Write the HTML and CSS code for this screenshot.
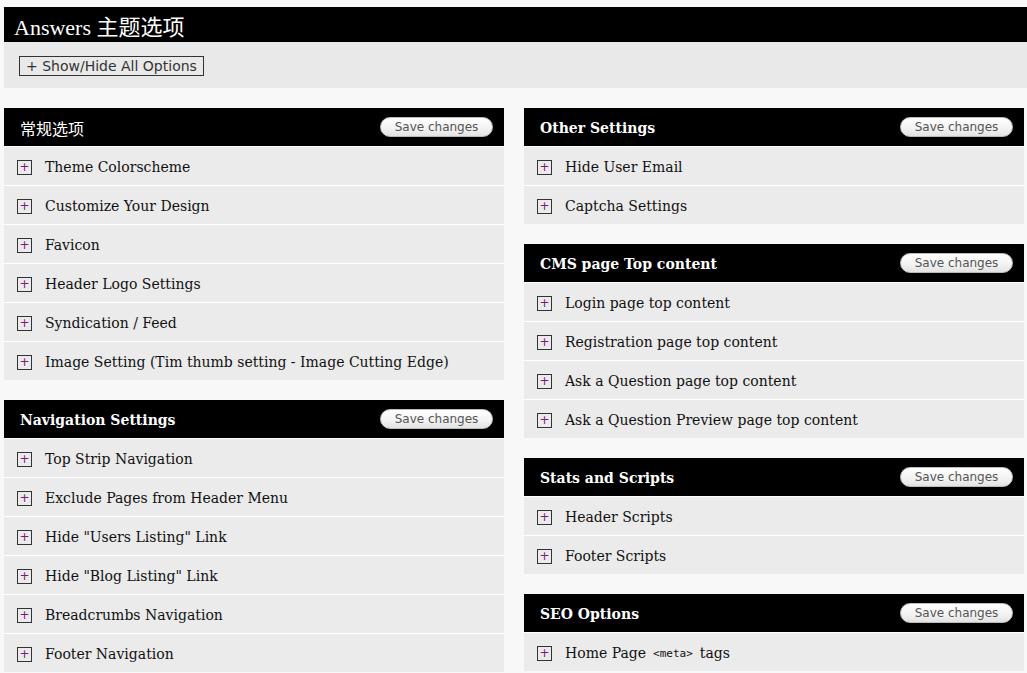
FILE: index.html
```html
<!DOCTYPE html>
<html lang="zh-CN">
<head>
    <meta charset="UTF-8">
    <title>Answers 主题选项</title>
    <link rel="stylesheet" href="styles.css">
</head>
<body>
    <div class="page-title">
        <h1>Answers 主题选项</h1>
    </div>
    <div class="toolbar">
        <button class="toggle-all">+ Show/Hide All Options</button>
    </div>

    <div class="columns">
        <div class="column">
            <div class="panel">
                <div class="panel-head">
                    <h2 class="cjk">常规选项</h2>
                    <button class="save">Save changes</button>
                </div>
                <div class="option"><span class="plus">+</span>Theme Colorscheme</div>
                <div class="option"><span class="plus">+</span>Customize Your Design</div>
                <div class="option"><span class="plus">+</span>Favicon</div>
                <div class="option"><span class="plus">+</span>Header Logo Settings</div>
                <div class="option"><span class="plus">+</span>Syndication / Feed</div>
                <div class="option"><span class="plus">+</span>Image Setting (Tim thumb setting - Image Cutting Edge)</div>
            </div>
            <div class="panel">
                <div class="panel-head">
                    <h2>Navigation Settings</h2>
                    <button class="save">Save changes</button>
                </div>
                <div class="option"><span class="plus">+</span>Top Strip Navigation</div>
                <div class="option"><span class="plus">+</span>Exclude Pages from Header Menu</div>
                <div class="option"><span class="plus">+</span>Hide "Users Listing" Link</div>
                <div class="option"><span class="plus">+</span>Hide "Blog Listing" Link</div>
                <div class="option"><span class="plus">+</span>Breadcrumbs Navigation</div>
                <div class="option"><span class="plus">+</span>Footer Navigation</div>
            </div>
        </div>

        <div class="column">
            <div class="panel">
                <div class="panel-head">
                    <h2>Other Settings</h2>
                    <button class="save">Save changes</button>
                </div>
                <div class="option"><span class="plus">+</span>Hide User Email</div>
                <div class="option"><span class="plus">+</span>Captcha Settings</div>
            </div>
            <div class="panel">
                <div class="panel-head">
                    <h2>CMS page Top content</h2>
                    <button class="save">Save changes</button>
                </div>
                <div class="option"><span class="plus">+</span>Login page top content</div>
                <div class="option"><span class="plus">+</span>Registration page top content</div>
                <div class="option"><span class="plus">+</span>Ask a Question page top content</div>
                <div class="option"><span class="plus">+</span>Ask a Question Preview page top content</div>
            </div>
            <div class="panel">
                <div class="panel-head">
                    <h2>Stats and Scripts</h2>
                    <button class="save">Save changes</button>
                </div>
                <div class="option"><span class="plus">+</span>Header Scripts</div>
                <div class="option"><span class="plus">+</span>Footer Scripts</div>
            </div>
            <div class="panel">
                <div class="panel-head">
                    <h2>SEO Options</h2>
                    <button class="save">Save changes</button>
                </div>
                <div class="option"><span class="plus">+</span>Home Page <code>&lt;meta&gt;</code> tags</div>
            </div>
        </div>
    </div>
</body>
</html>
```

FILE: styles.css
```css
body {
    margin: 0;
    padding: 7px 0 0 4px;
    background-color: #f8f8f8;
    font-family: "DejaVu Serif", "Noto Sans CJK SC", serif;
    color: #111;
}
.page-title {
    background: #000;
    height: 35px;
    padding: 0 10px;
    display: flex;
    align-items: center;
}
.page-title h1 {
    margin: 0;
    color: #fff;
    font-family: "Liberation Serif", "Noto Sans CJK SC", serif;
    font-weight: normal;
    font-size: 22px;
}
.toolbar {
    background: #e9e9e9;
    height: 46px;
    padding: 0 15px;
    display: flex;
    align-items: center;
}
.toggle-all {
    font-family: "DejaVu Sans", sans-serif;
    font-size: 14px;
    color: #333;
    background: transparent;
    border: 1px solid #333;
    height: 20px;
    padding: 0 6px;
    margin-top: 1px;
}
.columns {
    display: flex;
    gap: 20px;
    padding-top: 20px;
}
.column {
    width: 500px;
    display: flex;
    flex-direction: column;
    gap: 20px;
}
.panel-head {
    background: #000;
    height: 38px;
    display: flex;
    align-items: center;
    justify-content: space-between;
    padding: 0 11px 0 16px;
}
.panel-head h2 {
    margin: 2px 0 0;
    color: #fff;
    font-size: 14px;
    font-weight: bold;
    font-family: "DejaVu Serif", "Noto Sans CJK SC", serif;
}
.panel-head h2.cjk {
    font-weight: normal;
    font-size: 16px;
}
.save {
    font-family: "DejaVu Sans", sans-serif;
    font-size: 12px;
    color: #555;
    width: 113px;
    height: 20px;
    border: 1px solid #bbb;
    border-radius: 10px;
    background: linear-gradient(#ffffff, #f2f2f2 60%, #e2e2e2);
    padding: 0;
}
.option {
    background: #ebebeb;
    height: 38px;
    box-sizing: border-box;
    padding-top: 2px;
    border-top: 1px solid #fff;
    display: flex;
    align-items: center;
    padding-left: 13px;
    font-size: 14px;
}
.panel .option {
    height: 39px;
}
.plus {
    width: 13px;
    height: 13px;
    border: 1px solid #333;
    font-family: "DejaVu Sans", sans-serif;
    font-size: 12px;
    line-height: 13px;
    text-align: center;
    color: #7a1a7a;
    margin: 1px 13px 0 0;
    flex: none;
}
.option code {
    font-family: "DejaVu Sans Mono", monospace;
    font-size: 11px;
    margin: 0 7px 0 7px;
}
```
